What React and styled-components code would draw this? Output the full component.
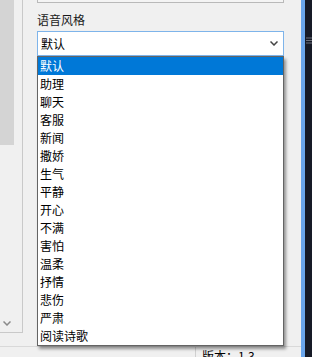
import React, { useState } from "react";
import styled, { createGlobalStyle } from "styled-components";

const GlobalStyle = createGlobalStyle`
  html, body {
    margin: 0;
    padding: 0;
    background: #f0f0f0;
    overflow: hidden;
  }
  body {
    font-family: "Noto Sans CJK SC", "Liberation Sans", sans-serif;
    font-size: 12px;
    color: #000;
  }
`;

const styles = [
  "默认", "助理", "聊天", "客服", "新闻", "撒娇", "生气", "平静",
  "开心", "不满", "害怕", "温柔", "抒情", "悲伤", "严肃", "阅读诗歌",
];

const Window = styled.div`
  width: 312px;
  height: 357px;
  display: flex;
  background: #f0f0f0;
  overflow: hidden;
`;

const Content = styled.div`
  width: 301px;
  display: flex;
  flex-direction: column;
`;

const Body = styled.div`
  height: 346px;
  flex-shrink: 0;
  display: flex;
  align-items: flex-start;
`;

const LeftPane = styled.div`
  width: 22px;
  height: 332px;
  border-right: 1px solid #c9c9c9;
  border-bottom: 1px solid #c9c9c9;
  display: flex;
`;

const ScrollBar = styled.div`
  width: 14px;
  display: flex;
  flex-direction: column;
  justify-content: space-between;
`;

const Thumb = styled.div`
  width: 14px;
  height: 145px;
  background: #d4d4d4;
`;

const ArrowButton = styled.div`
  height: 17px;
  display: flex;
  align-items: center;
  justify-content: center;
`;

const Main = styled.div`
  flex: 1;
  padding-left: 14px;
  padding-right: 17px;
  display: flex;
  flex-direction: column;
`;

const TopBox = styled.div`
  height: 2px;
  border: 1px solid #b9b9b9;
  border-top: none;
  background: #f4f4f4;
`;

const Label = styled.div`
  margin-top: 9px;
  margin-bottom: 3px;
  line-height: 16px;
  height: 16px;
  color: #1a1a1a;
`;

const ComboWrap = styled.div`
  position: relative;
`;

const Combo = styled.div`
  box-sizing: border-box;
  height: 25px;
  border: 1px solid #7eb4ea;
  background: #fff;
  display: flex;
  align-items: center;
  justify-content: space-between;
  padding: 0 5px 0 3px;
`;

const DropList = styled.div`
  position: absolute;
  top: 100%;
  left: 0;
  right: 0;
  box-sizing: border-box;
  border: 1px solid #646464;
  background: #fff;
  box-shadow: 2px 3px 3px rgba(0, 0, 0, 0.4);
  z-index: 2;
`;

const Option = styled.div`
  height: 18px;
  line-height: 18px;
  padding-left: 2px;
  background: ${({ selected }) => (selected ? "#0078d7" : "#fff")};
  color: ${({ selected }) => (selected ? "#fff" : "#000")};
`;

const RightStrip = styled.div`
  flex: 1;
  display: flex;
`;

const BlueEdge = styled.div`
  width: 4px;
  background: #6aa6ec;
`;

const DarkEdge = styled.div`
  flex: 1;
  background: #161a26;
  padding-top: 30px;
`;

const StatusBar = styled.div`
  flex: 1;
  min-height: 0;
  border-top: 1px solid #d9d9d9;
  display: flex;
  align-items: flex-start;
`;

const StatusCell = styled.div`
  width: ${({ w }) => w}px;
  height: 30px;
  border-right: ${({ divider }) => (divider ? "1px solid #d0d0d0" : "none")};
  padding-left: ${({ pad }) => pad || 0}px;
  padding-top: 1px;
  line-height: 16px;
  white-space: nowrap;
`;

function Chevron({ color = "#555" }) {
  return (
    <svg width="8" height="5" viewBox="0 0 8 5">
      <path d="M0.5 0.5 L4 4 L7.5 0.5" fill="none" stroke={color} strokeWidth="1.5" />
    </svg>
  );
}

export default function App() {
  const [selected] = useState(0);
  return (
    <>
      <GlobalStyle />
      <Window>
        <Content>
          <Body>
            <LeftPane>
              <ScrollBar>
                <Thumb />
                <ArrowButton>
                  <Chevron color="#8a8a8a" />
                </ArrowButton>
              </ScrollBar>
            </LeftPane>
            <Main>
              <TopBox />
              <Label>语音风格</Label>
              <ComboWrap>
                <Combo>
                  <span>{styles[selected]}</span>
                  <Chevron color="#444" />
                </Combo>
                <DropList>
                  {styles.map((s, i) => (
                    <Option key={s} selected={i === selected}>
                      {s}
                    </Option>
                  ))}
                </DropList>
              </ComboWrap>
            </Main>
          </Body>
          <StatusBar>
            <StatusCell w={197} divider />
            <StatusCell w={100} pad={6}>版本：1.3</StatusCell>
          </StatusBar>
        </Content>
        <RightStrip>
          <BlueEdge />
          <DarkEdge>
            <svg width="7" height="7" viewBox="0 0 7 7">
              <path d="M1 1 H7 M1 3.5 H7 M1 6 H7" stroke="#6b6f7a" strokeWidth="1" />
            </svg>
          </DarkEdge>
        </RightStrip>
      </Window>
    </>
  );
}
